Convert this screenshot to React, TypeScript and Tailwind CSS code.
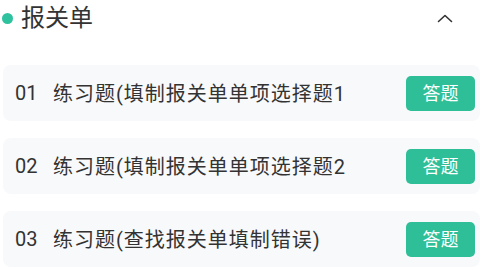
const items = [
  { no: '01', title: '练习题(填制报关单单项选择题1' },
  { no: '02', title: '练习题(填制报关单单项选择题2' },
  { no: '03', title: '练习题(查找报关单填制错误)' },
]

export default function App() {
  return (
    <div
      className="w-[485px] h-[270px] bg-white overflow-hidden"
      style={{ fontFamily: 'Roboto, "Noto Sans CJK SC", sans-serif' }}
    >
      {/* Header */}
      <div className="flex items-center h-[36px] pl-[2px] pr-[32px]">
        <span className="w-[11px] h-[11px] rounded-full bg-[#2ec29e]" />
        <span className="ml-[8px] text-[24px] leading-none text-[#333]">报关单</span>
        <svg className="ml-auto w-[16px] h-[9px]" viewBox="0 0 16 9" fill="none">
          <path d="M1.5 7.5 L8 1.5 L14.5 7.5" stroke="#333" strokeWidth="1.6" strokeLinecap="round" strokeLinejoin="round" />
        </svg>
      </div>

      {/* List */}
      <div className="flex flex-col gap-[17px] mt-[29px] px-[3px] pr-[5px]">
        {items.map((item) => (
          <div
            key={item.no}
            className="flex items-center h-[56px] rounded-[8px] bg-[#f8f9fb] pl-[12px] pr-[5px]"
          >
            <span className="w-[38px] text-[20px] text-[#333]">{item.no}</span>
            <span className="flex-1 text-[20px] tracking-[1px] text-[#333] truncate pt-[2px]">{item.title}</span>
            <button className="w-[69px] h-[35px] rounded-[5px] bg-[#2ebf98] text-white text-[18px]">
              答题
            </button>
          </div>
        ))}
      </div>
    </div>
  )
}
